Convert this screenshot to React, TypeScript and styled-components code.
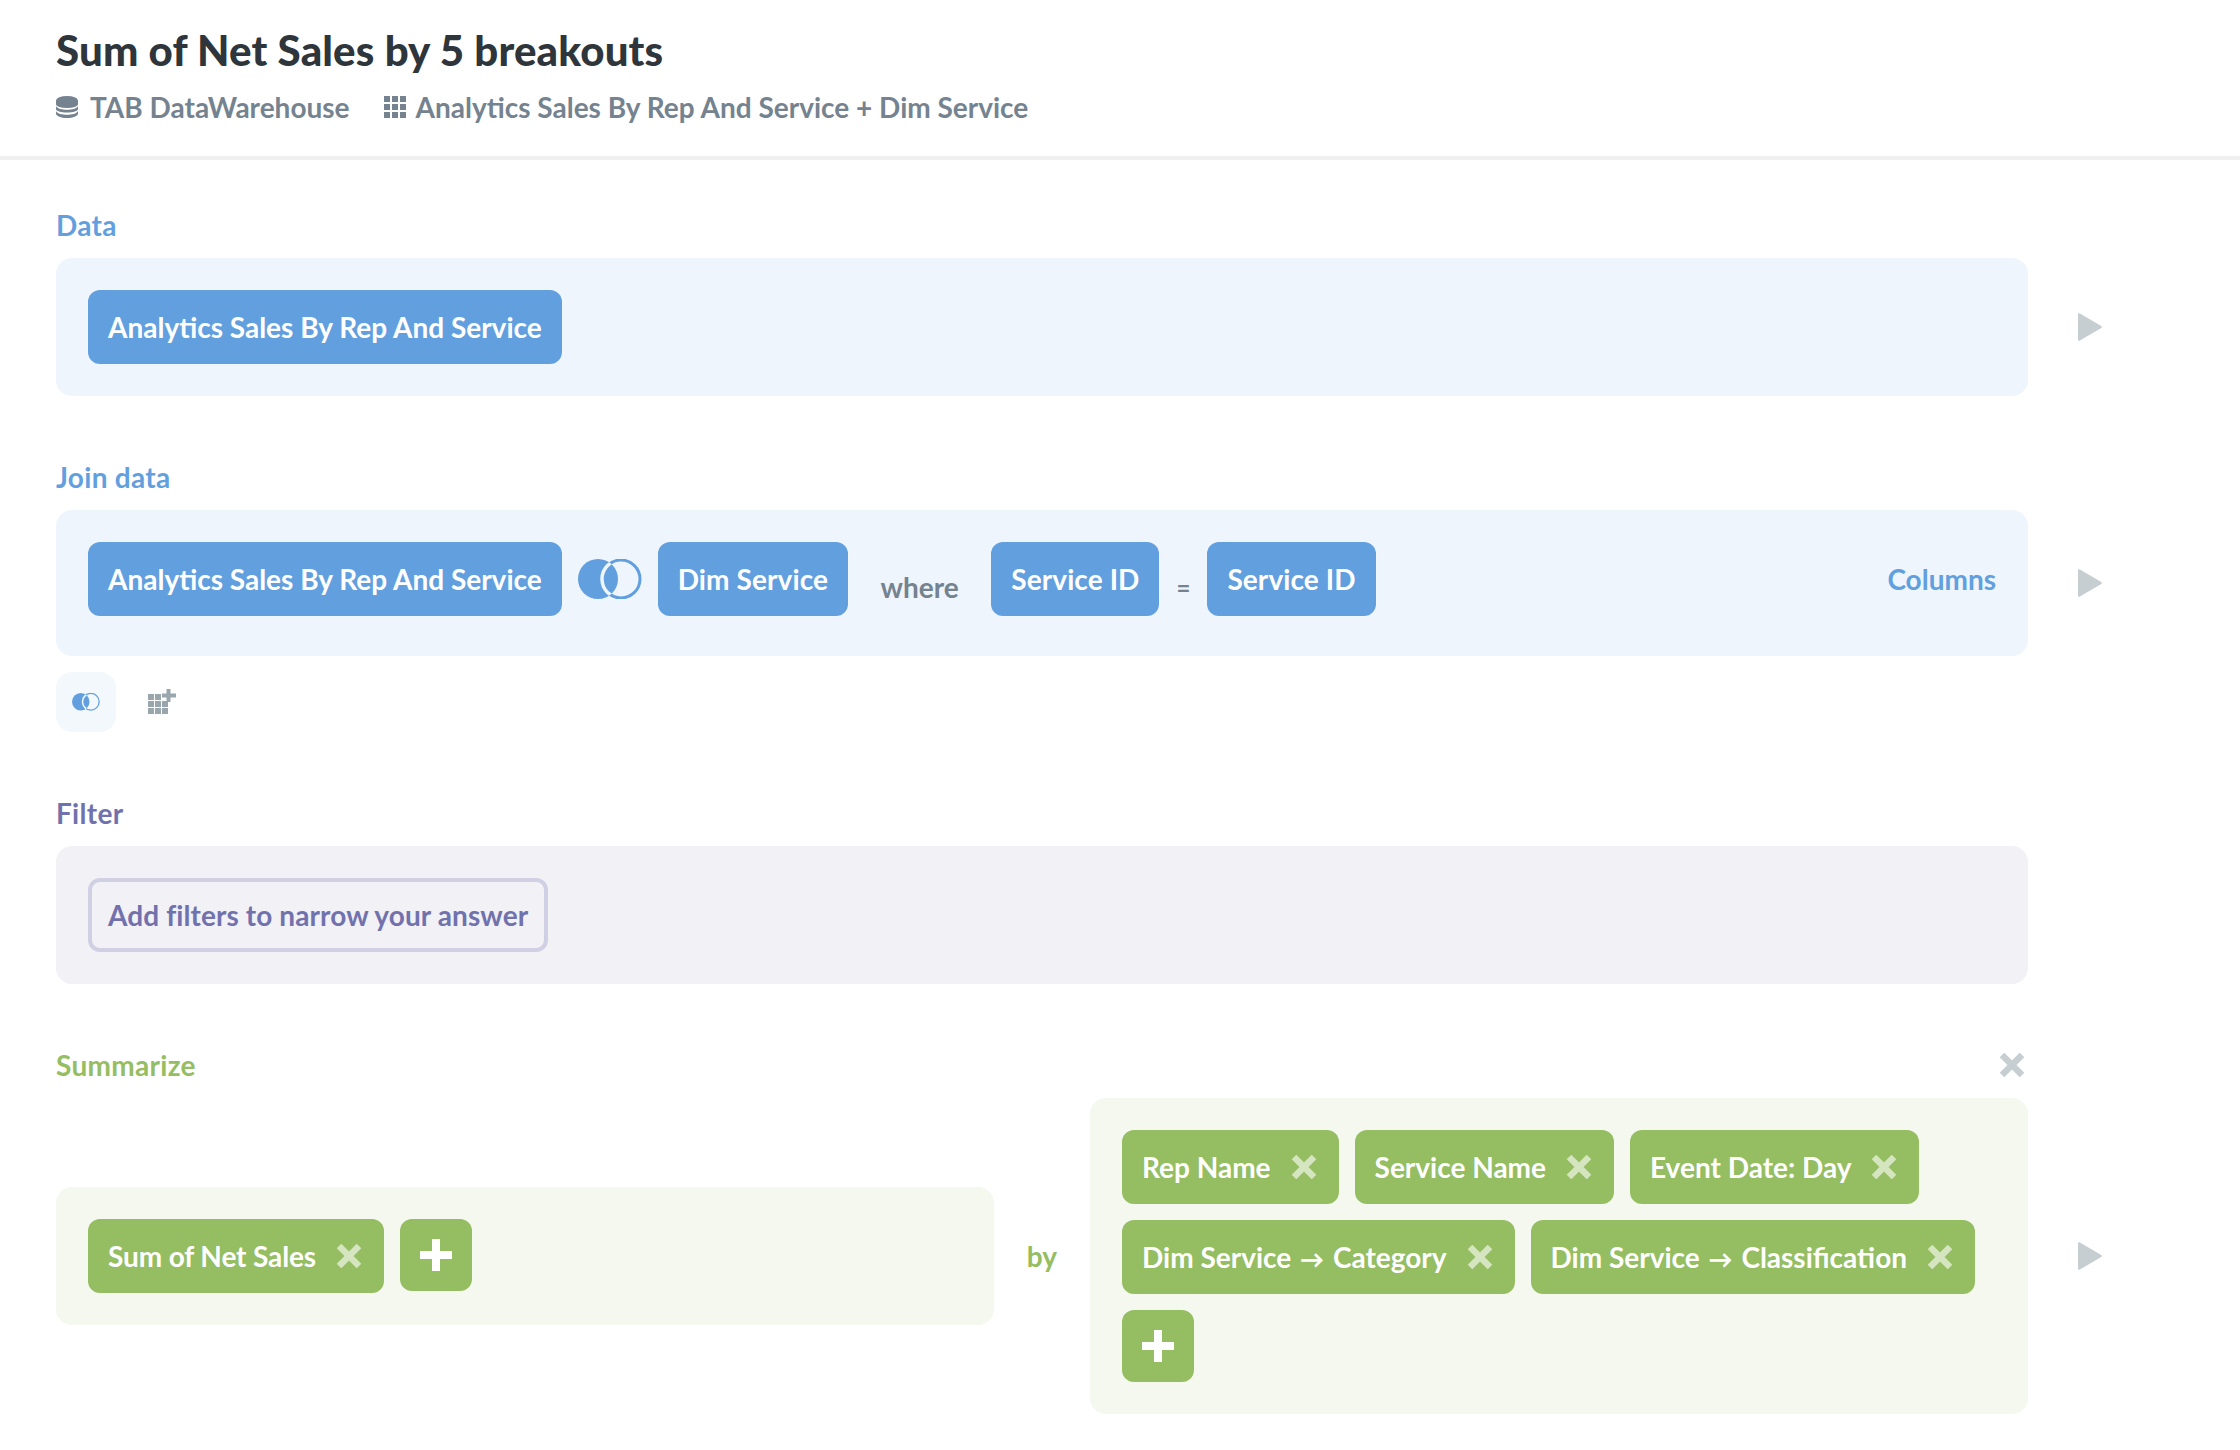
import React, { useId } from 'react';
import styled, { createGlobalStyle } from 'styled-components';

const BLUE = '#629fdf';
const BLUE_BG = '#eef5fd';
const GREEN = '#95bd61';
const GREEN_BG = '#f4f8ef';
const PURPLE = '#7172ad';
const PURPLE_BG = '#f1f1f6';
const GREY = '#74838f';

const GlobalStyle = createGlobalStyle`
  html, body {
    margin: 0;
    padding: 0;
    background: #fff;
    font-family: Lato, "Noto Sans", sans-serif;
    -webkit-font-smoothing: antialiased;
  }
  * {
    box-sizing: border-box;
  }
`;

function DatabaseIcon() {
  return (
    <svg width="22" height="22" viewBox="0 0 22 22" fill={GREY}>
      <ellipse cx="11" cy="4.5" rx="11" ry="4.5" />
      <rect x="0" y="4.5" width="22" height="4" />
      <ellipse cx="11" cy="8.5" rx="11" ry="3.5" />
      <path d="M0 10.2C1.5 12.6 6 13.8 11 13.8S20.5 12.6 22 10.2V13C22 15 17 16.6 11 16.6S0 15 0 13Z" />
      <path d="M0 15.2C1.5 17.6 6 18.8 11 18.8S20.5 17.6 22 15.2V17.5C22 20 17 22 11 22S0 20 0 17.5Z" />
    </svg>
  );
}

function GridIcon() {
  const cells = [0, 8, 16];
  return (
    <svg width="22" height="22" viewBox="0 0 22 22" fill={GREY}>
      {cells.map((y) => cells.map((x) => <rect key={`${x}-${y}`} x={x} y={y} width="6" height="6" />))}
    </svg>
  );
}

function GridPlusIcon() {
  const cells = [0, 7, 14];
  return (
    <svg width="28" height="26" viewBox="0 0 28 26" fill="#9aa6ae">
      {cells.map((y) =>
        cells.map((x) =>
          x === 14 && y === 0 ? null : <rect key={`${x}-${y}`} x={x} y={y + 5} width="6" height="6" />
        )
      )}
      <path d="M18.5 0h4v4.5H28v4h-5.5V13h-4V8.500H14v-4h4.500Z" />
    </svg>
  );
}

function JoinIcon({ size, halo }: { size: number; halo: string }) {
  const id = useId();
  return (
    <svg width={size} height={(size * 40) / 64} viewBox="0 0 64 40">
      <defs>
        <clipPath id={id}>
          <circle cx="20" cy="20" r="20" />
        </clipPath>
      </defs>
      <circle cx="20" cy="20" r="20" fill={BLUE} />
      <circle cx="43" cy="20" r="19" fill="none" stroke={BLUE} strokeWidth="3" />
      <circle cx="43" cy="20" r="19" fill="none" stroke={halo} strokeWidth="3.500" clipPath={`url(#${id})`} />
    </svg>
  );
}

function CloseIcon({ color }: { color: string }) {
  return (
    <svg width="26" height="24" viewBox="0 0 26 24" fill="none" stroke={color} strokeWidth="6.500">
      <path d="M3 2L23 22M23 2L3 22" />
    </svg>
  );
}

function PlusIcon() {
  return (
    <svg width="32" height="32" viewBox="0 0 32 32" fill="#fff">
      <path d="M12 0h8v12h12v8H20v12h-8V20H0v-8h12Z" />
    </svg>
  );
}

function RunIcon() {
  return (
    <svg width="24" height="28" viewBox="0 0 24 28" fill="#c6ced2">
      <path d="M1.500 0.300L23.300 13C24 13.500 24 14.500 23.300 15L1.500 27.700C0.800 28.100 0 27.700 0 26.800V1.200C0 0.300 0.800 -0.100 1.500 0.300Z" />
    </svg>
  );
}

const Page = styled.div`
  width: 2240px;
  height: 1450px;
  overflow: hidden;
`;

const Header = styled.header`
  height: 160px;
  padding: 25px 0 0 56px;
  border-bottom: 4px solid #f0f0f0;
`;

const Title = styled.h1`
  margin: 0 0 15px;
  font-size: 42px;
  line-height: 50px;
  font-weight: 900;
  letter-spacing: 0.15px;
  color: #2e353b;
`;

const Meta = styled.div`
  display: flex;
  gap: 34px;
`;

const MetaItem = styled.div<{ $gap: number }>`
  display: flex;
  align-items: center;
  gap: ${(props) => props.$gap}px;
  font-size: 28px;
  line-height: 34px;
  font-weight: 700;
  color: ${GREY};
`;

const Content = styled.main`
  padding: 46px 0 0 56px;
`;

const Section = styled.section`
  margin-bottom: 62px;
`;

const CellLabel = styled.div<{ $color: string }>`
  height: 40px;
  margin-bottom: 12px;
  padding-bottom: 2px;
  width: 1972px;
  display: flex;
  align-items: center;
  justify-content: space-between;
  font-size: 28px;
  font-weight: 700;
  letter-spacing: 0.3px;
  color: ${(props) => props.$color};
`;

const LabelClose = styled.span`
  display: flex;
  margin-right: 3px;
`;

const CellRow = styled.div`
  display: flex;
  align-items: center;
  gap: 50px;
`;

const Panel = styled.div<{ $background: string; $paddingBottom?: number }>`
  width: 1972px;
  padding: 32px 32px ${(props) => props.$paddingBottom ?? 32}px;
  display: flex;
  align-items: center;
  gap: 16px;
  background: ${(props) => props.$background};
  border-radius: 16px;
`;

const Chip = styled.div<{ $color: string; $tracking?: number }>`
  height: 74px;
  padding: 0 20px;
  display: flex;
  align-items: center;
  gap: 20px;
  flex: none;
  font-size: 28px;
  font-weight: 700;
  letter-spacing: ${(props) => props.$tracking ?? 0}px;
  color: #fff;
  background: ${(props) => props.$color};
  border-radius: 12px;
  white-space: nowrap;
`;

const ChipRemove = styled.span`
  display: flex;
  margin-right: 2px;
`;

const ChipArrow = styled.span`
  margin: 0 2px;
  font-size: 24px;
  font-weight: 900;
`;

const AddButton = styled.div`
  width: 72px;
  height: 72px;
  flex: none;
  align-self: flex-start;
  display: grid;
  place-items: center;
  background: ${GREEN};
  border-radius: 12px;
`;

const Where = styled.span`
  margin: 16px 16.500px 0;
  font-size: 28px;
  font-weight: 700;
  color: ${GREY};
`;

const Equals = styled.span`
  margin: 16px 1px 0;
  font-size: 24px;
  font-weight: 700;
  color: ${GREY};
`;

const ColumnsLink = styled.span`
  margin-left: auto;
  font-size: 28px;
  font-weight: 700;
  color: ${BLUE};
`;

const JoinActions = styled.div`
  display: flex;
  align-items: center;
  gap: 32px;
  margin-top: 16px;
`;

const ActionButton = styled.div`
  width: 60px;
  height: 60px;
  display: grid;
  place-items: center;
  background: #f3f8fd;
  border-radius: 16px;
`;

const FilterPrompt = styled.div`
  height: 74px;
  padding: 0 16px;
  display: flex;
  align-items: center;
  font-size: 28px;
  font-weight: 700;
  letter-spacing: 0.1px;
  color: ${PURPLE};
  border: 4px solid #d0cfe3;
  border-radius: 12px;
`;

const SummarizeGrid = styled.div`
  width: 1972px;
  display: grid;
  grid-template-columns: 938px 96px 938px;
  align-items: center;
`;

const SummarizePanel = styled.div`
  padding: 32px;
  display: flex;
  flex-wrap: wrap;
  gap: 16px;
  background: ${GREEN_BG};
  border-radius: 16px;
`;

const By = styled.span`
  text-align: center;
  font-size: 28px;
  font-weight: 700;
  color: ${GREEN};
`;

const breakouts: { table?: string; label: string }[] = [
  { label: 'Rep Name' },
  { label: 'Service Name' },
  { label: 'Event Date: Day' },
  { table: 'Dim Service', label: 'Category' },
  { table: 'Dim Service', label: 'Classification' },
];

function RemovableChip({ table, label, tracking }: { table?: string; label: string; tracking?: number }) {
  return (
    <Chip $color={GREEN} $tracking={tracking}>
      <span>
        {table && (
          <>
            {table} <ChipArrow>→</ChipArrow>{' '}
          </>
        )}
        {label}
      </span>
      <ChipRemove>
        <CloseIcon color="rgba(255, 255, 255, 0.6)" />
      </ChipRemove>
    </Chip>
  );
}

export default function App() {
  return (
    <Page>
      <GlobalStyle />
      <Header>
        <Title>Sum of Net Sales by 5 breakouts</Title>
        <Meta>
          <MetaItem $gap={12}>
            <DatabaseIcon />
            TAB DataWarehouse
          </MetaItem>
          <MetaItem $gap={10}>
            <GridIcon />
            Analytics Sales By Rep And Service + Dim Service
          </MetaItem>
        </Meta>
      </Header>
      <Content>
        <Section>
          <CellLabel $color={BLUE}>Data</CellLabel>
          <CellRow>
            <Panel $background={BLUE_BG}>
              <Chip $color={BLUE}>Analytics Sales By Rep And Service</Chip>
            </Panel>
            <RunIcon />
          </CellRow>
        </Section>

        <Section>
          <CellLabel $color={BLUE}>Join data</CellLabel>
          <CellRow>
            <Panel $background={BLUE_BG} $paddingBottom={40}>
              <Chip $color={BLUE}>Analytics Sales By Rep And Service</Chip>
              <JoinIcon size={64} halo={BLUE_BG} />
              <Chip $color={BLUE} $tracking={0.1}>
                Dim Service
              </Chip>
              <Where>where</Where>
              <Chip $color={BLUE} $tracking={0.1}>
                Service ID
              </Chip>
              <Equals>=</Equals>
              <Chip $color={BLUE} $tracking={0.1}>
                Service ID
              </Chip>
              <ColumnsLink>Columns</ColumnsLink>
            </Panel>
            <RunIcon />
          </CellRow>
          <JoinActions>
            <ActionButton>
              <JoinIcon size={28} halo="#f3f8fd" />
            </ActionButton>
            <GridPlusIcon />
          </JoinActions>
        </Section>

        <Section>
          <CellLabel $color={PURPLE}>Filter</CellLabel>
          <Panel $background={PURPLE_BG}>
            <FilterPrompt>Add filters to narrow your answer</FilterPrompt>
          </Panel>
        </Section>

        <section>
          <CellLabel $color={GREEN}>
            Summarize
            <LabelClose>
              <CloseIcon color="#c6ced2" />
            </LabelClose>
          </CellLabel>
          <CellRow>
            <SummarizeGrid>
              <SummarizePanel>
                <RemovableChip label="Sum of Net Sales" tracking={-0.12} />
                <AddButton>
                  <PlusIcon />
                </AddButton>
              </SummarizePanel>
              <By>by</By>
              <SummarizePanel>
                {breakouts.map((item) => (
                  <RemovableChip key={item.label} table={item.table} label={item.label} />
                ))}
                <AddButton>
                  <PlusIcon />
                </AddButton>
              </SummarizePanel>
            </SummarizeGrid>
            <RunIcon />
          </CellRow>
        </section>
      </Content>
    </Page>
  );
}
